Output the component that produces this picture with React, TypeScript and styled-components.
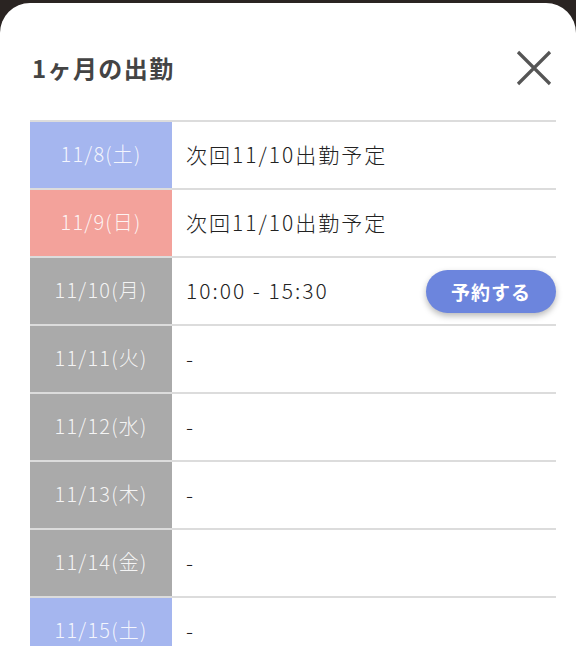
import styled, { createGlobalStyle } from 'styled-components';

const GlobalStyle = createGlobalStyle`
	html, body {
		margin: 0;
		padding: 0;
		background: #2a2422;
		height: 100%;
		overflow: hidden;
	}
	body {
		font-family: 'Noto Sans CJK JP', sans-serif;
	}
`;

const Sheet = styled.div`
	margin-top: 3px;
	height: 643px;
	background: #fff;
	border-radius: 30px 30px 0 0;
	padding: 0 20px 0 30px;
	box-sizing: border-box;
	overflow: hidden;
`;

const Header = styled.div`
	display: flex;
	align-items: center;
	justify-content: space-between;
	height: 60px;
	margin-top: 36px;
	margin-bottom: 21px;
`;

const Title = styled.h2`
	margin: 0 0 4px 2px;
	font-size: 24px;
	font-weight: 700;
	color: #444;
	letter-spacing: 1.4px;
`;

const CloseButton = styled.button`
	width: 40px;
	height: 40px;
	padding: 0;
	margin-right: 2px;
	margin-bottom: 2px;
	border: none;
	background: none;
	display: flex;
	align-items: center;
	justify-content: center;
	cursor: pointer;
`;

const Table = styled.div`
	display: flex;
	flex-direction: column;
`;

const Row = styled.div`
	display: grid;
	grid-template-columns: 142px 1fr;
	height: 68px;
	border-top: 2px solid #dcdcdc;
	box-sizing: border-box;
`;

const dateColors = {
	sat: '#a5b6ef',
	sun: '#f3a29b',
	weekday: '#aaaaaa',
};

type DayKind = keyof typeof dateColors;

const DateCell = styled.div<{ $kind: DayKind }>`
	background: ${({ $kind }) => dateColors[$kind]};
	color: rgba(255, 255, 255, 0.88);
	font-size: 20px;
	font-weight: 300;
	letter-spacing: 1.2px;
	display: flex;
	align-items: center;
	justify-content: center;
	padding-bottom: 3px;
`;

const Content = styled.div`
	display: flex;
	align-items: center;
	justify-content: space-between;
	padding-left: 14px;
	font-size: 21px;
	font-weight: 300;
	color: #222;
	letter-spacing: 2px;

	& > span {
		padding-bottom: 3px;
	}
`;

const ReserveButton = styled.button`
	width: 130px;
	height: 43px;
	border: none;
	border-radius: 22px;
	background: #6c85dd;
	color: #fff;
	font-family: 'Noto Sans CJK JP', sans-serif;
	font-size: 19px;
	font-weight: 700;
	letter-spacing: 1px;
	box-shadow: 0 3px 6px rgba(0, 0, 0, 0.28);
	cursor: pointer;
`;

const days: { date: string; kind: DayKind; text: string; reserve?: boolean }[] = [
	{ date: '11/8(土)', kind: 'sat', text: '次回11/10出勤予定' },
	{ date: '11/9(日)', kind: 'sun', text: '次回11/10出勤予定' },
	{ date: '11/10(月)', kind: 'weekday', text: '10:00 - 15:30', reserve: true },
	{ date: '11/11(火)', kind: 'weekday', text: '-' },
	{ date: '11/12(水)', kind: 'weekday', text: '-' },
	{ date: '11/13(木)', kind: 'weekday', text: '-' },
	{ date: '11/14(金)', kind: 'weekday', text: '-' },
	{ date: '11/15(土)', kind: 'sat', text: '-' },
];

const App = () => {
	return (
		<>
			<GlobalStyle />
			<Sheet>
				<Header>
					<Title>1ヶ月の出勤</Title>
					<CloseButton aria-label='閉じる'>
						<svg width='36' height='36' viewBox='0 0 36 36'>
							<path d='M2 2 L34 34 M34 2 L2 34' stroke='#555' strokeWidth='3.2' />
						</svg>
					</CloseButton>
				</Header>
				<Table>
					{days.map((d) => (
						<Row key={d.date}>
							<DateCell $kind={d.kind}>{d.date}</DateCell>
							<Content>
								<span>{d.text}</span>
								{d.reserve && <ReserveButton>予約する</ReserveButton>}
							</Content>
						</Row>
					))}
				</Table>
			</Sheet>
		</>
	);
};

export default App;
